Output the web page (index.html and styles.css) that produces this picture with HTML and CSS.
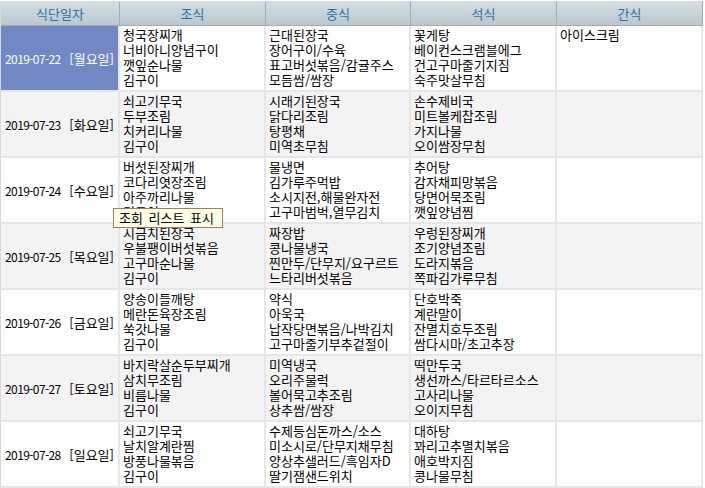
FILE: index.html
```html
<!DOCTYPE html>
<html lang="ko">
<head>
<meta charset="utf-8">
<title>식단표</title>
<link rel="stylesheet" href="styles.css">
</head>
<body>
<div class="grid-wrap">
<table class="grid">
<colgroup><col class="c-date"><col class="c-meal"><col class="c-meal2"><col class="c-meal"><col class="c-meal"></colgroup>
<thead>
<tr><th>식단일자</th><th>조식</th><th>중식</th><th>석식</th><th>간식</th></tr>
</thead>
<tbody>
<tr>
<td class="date selected"><span class="ymd">2019-07-22</span> [월요일]</td>
<td>청국장찌개<br>너비아니양념구이<br>깻잎순나물<br>김구이</td>
<td>근대된장국<br>장어구이/수육<br>표고버섯볶음/감귤주스<br>모듬쌈/쌈장</td>
<td>꽃게탕<br>베이컨스크램블에그<br>건고구마줄기지짐<br>숙주맛살무침</td>
<td>아이스크림</td>
</tr>
<tr class="alt">
<td class="date"><span class="ymd">2019-07-23</span> [화요일]</td>
<td>쇠고기무국<br>두부조림<br>치커리나물<br>김구이</td>
<td>시래기된장국<br>닭다리조림<br>탕평채<br>미역초무침</td>
<td>손수제비국<br>미트볼케찹조림<br>가지나물<br>오이쌈장무침</td>
<td></td>
</tr>
<tr>
<td class="date"><span class="ymd">2019-07-24</span> [수요일]</td>
<td>버섯된장찌개<br>코다리엿장조림<br>아주까리나물<br>김구이</td>
<td>물냉면<br>김가루주먹밥<br>소시지전,해물완자전<br>고구마범벅,열무김치</td>
<td>추어탕<br>감자채피망볶음<br>당면어묵조림<br>깻잎양념찜</td>
<td></td>
</tr>
<tr class="alt">
<td class="date"><span class="ymd">2019-07-25</span> [목요일]</td>
<td>시금치된장국<br>우불팽이버섯볶음<br>고구마순나물<br>김구이</td>
<td>짜장밥<br>콩나물냉국<br>찐만두/단무지/요구르트<br>느타리버섯볶음</td>
<td>우렁된장찌개<br>조기양념조림<br>도라지볶음<br>쪽파김가루무침</td>
<td></td>
</tr>
<tr>
<td class="date"><span class="ymd">2019-07-26</span> [금요일]</td>
<td>양송이들깨탕<br>메란돈육장조림<br>쑥갓나물<br>김구이</td>
<td>약식<br>아욱국<br>납작당면볶음/나박김치<br>고구마줄기부추겉절이</td>
<td>단호박죽<br>계란말이<br>잔멸치호두조림<br>쌈다시마/초고추장</td>
<td></td>
</tr>
<tr class="alt">
<td class="date"><span class="ymd">2019-07-27</span> [토요일]</td>
<td>바지락살순두부찌개<br>삼치무조림<br>비름나물<br>김구이</td>
<td>미역냉국<br>오리주물럭<br>볼어묵고추조림<br>상추쌈/쌈장</td>
<td>떡만두국<br>생선까스/타르타르소스<br>고사리나물<br>오이지무침</td>
<td></td>
</tr>
<tr>
<td class="date"><span class="ymd">2019-07-28</span> [일요일]</td>
<td>쇠고기무국<br>날치알계란찜<br>방풍나물볶음<br>김구이</td>
<td>수제등심돈까스/소스<br>미소시로/단무지채무침<br>양상추샐러드/흑임자D<br>딸기잼샌드위치</td>
<td>대하탕<br>꽈리고추멸치볶음<br>애호박지짐<br>콩나물무침</td>
<td></td>
</tr>
</tbody>
</table>
<div class="tooltip">조회 리스트 표시</div>
</div>
</body>
</html>
```

FILE: styles.css
```css
html, body {
  margin: 0;
  padding: 0;
  background: #ffffff;
}
body {
  padding-top: 1px;
  font-family: "Noto Sans CJK KR", "Liberation Sans", sans-serif;
  font-size: 13px;
  color: #000000;
  overflow: hidden;
}
.grid-wrap {
  position: relative;
  width: 703px;
}
.grid {
  width: 703px;
  table-layout: fixed;
  border-collapse: separate;
  border-spacing: 0;
  border-top: 1px solid #d8d8d8;
  border-left: 1px solid #d8d8d8;
}
.c-date { width: 119px; }
.c-meal { width: 146px; }
.c-meal2 { width: 145px; }
.grid th {
  height: 23px;
  padding: 0;
  font-weight: 400;
  font-size: 13px;
  line-height: 23px;
  color: #2f6f9f;
  background: linear-gradient(#d3dee4, #b9c8cf);
  border-right: 1px solid #a9a9a9;
  border-bottom: 1px solid #a9a9a9;
}
.grid td {
  box-sizing: border-box;
  height: 66px;
  padding: 1px 0 0 3px;
  line-height: 15px;
  vertical-align: top;
  white-space: nowrap;
  border-right: 2px solid #e6e6e6;
  border-bottom: 2px solid #e6e6e6;
  overflow: hidden;
}
.grid .alt td {
  background: #f3f3f3;
}
.grid td.date {
  text-align: center;
  vertical-align: middle;
  padding: 0;
  word-spacing: 5px;
}
.ymd {
  font-size: 12px;
  letter-spacing: -0.6px;
}
.grid td.selected {
  background: #7288c4;
  color: #ffffff;
}
.tooltip {
  position: absolute;
  left: 113px;
  top: 207px;
  box-sizing: border-box;
  width: 110px;
  height: 20px;
  border: 1px solid #a67c52;
  background: #ffffe6;
  font-size: 13px;
  line-height: 18px;
  padding-left: 5px;
  word-spacing: 2px;
  white-space: nowrap;
}
```
